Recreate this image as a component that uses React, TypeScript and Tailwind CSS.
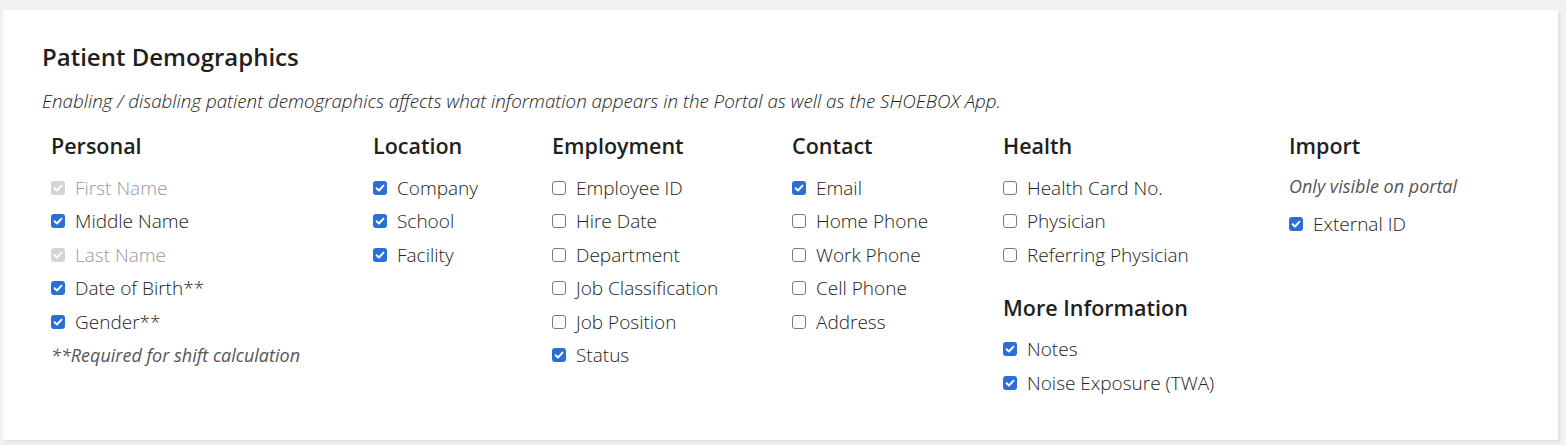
import React from 'react';

type Item = { label: string; checked: boolean; disabled?: boolean };

const personal: Item[] = [
  { label: 'First Name', checked: true, disabled: true },
  { label: 'Middle Name', checked: true },
  { label: 'Last Name', checked: true, disabled: true },
  { label: 'Date of Birth**', checked: true },
  { label: 'Gender**', checked: true },
];

const location: Item[] = [
  { label: 'Company', checked: true },
  { label: 'School', checked: true },
  { label: 'Facility', checked: true },
];

const employment: Item[] = [
  { label: 'Employee ID', checked: false },
  { label: 'Hire Date', checked: false },
  { label: 'Department', checked: false },
  { label: 'Job Classification', checked: false },
  { label: 'Job Position', checked: false },
  { label: 'Status', checked: true },
];

const contact: Item[] = [
  { label: 'Email', checked: true },
  { label: 'Home Phone', checked: false },
  { label: 'Work Phone', checked: false },
  { label: 'Cell Phone', checked: false },
  { label: 'Address', checked: false },
];

const health: Item[] = [
  { label: 'Health Card No.', checked: false },
  { label: 'Physician', checked: false },
  { label: 'Referring Physician', checked: false },
];

const moreInfo: Item[] = [
  { label: 'Notes', checked: true },
  { label: 'Noise Exposure (TWA)', checked: true },
];

function Box({ checked, disabled }: { checked: boolean; disabled?: boolean }) {
  if (!checked) {
    return <span className="w-[14px] h-[14px] shrink-0 rounded-[3px] border border-[#7a7a7a] bg-white" />;
  }
  return (
    <span className={`w-[14px] h-[14px] shrink-0 rounded-[3px] flex items-center justify-center ${disabled ? 'bg-[#d4d4d4]' : 'bg-[#2b6fd6]'}`}>
      <svg width="10" height="10" viewBox="0 0 10 10" fill="none">
        <path d="M1.6 5.2 L4 7.5 L8.5 2.6" stroke="white" strokeWidth="1.9" strokeLinecap="round" strokeLinejoin="round" />
      </svg>
    </span>
  );
}

function CheckRow({ item }: { item: Item }) {
  return (
    <label className="flex items-center h-[33.5px] gap-[10px]">
      <Box checked={item.checked} disabled={item.disabled} />
      <span className={item.disabled ? 'text-[#999]' : 'text-[#222]'}>{item.label}</span>
    </label>
  );
}

function Heading({ children, className = '' }: { children: React.ReactNode; className?: string }) {
  return <h3 className={`text-[21.5px] leading-[28px] font-semibold text-[#1f1f1f] mb-[11px] ${className}`}>{children}</h3>;
}

function Column({ title, items, width }: { title: string; items: Item[]; width: string }) {
  return (
    <div className={width}>
      <Heading>{title}</Heading>
      {items.map(it => <CheckRow key={it.label} item={it} />)}
    </div>
  );
}

export default function App() {
  return (
    <div className="min-h-[445px] bg-[#f2f2f2] pt-[10px] pl-[3px] pr-[8px]" style={{ fontFamily: '"Open Sans", "Liberation Sans", sans-serif' }}>
      <div className="bg-white h-[430px] pl-[39px] pt-[31px] shadow-[2px_2px_3px_rgba(0,0,0,0.08)]">
        <h2 className="text-[24px] leading-[32px] font-semibold text-[#1f1f1f]">Patient Demographics</h2>
        <p className="mt-[15px] text-[18.8px] leading-[26px] italic font-light text-[#222]">
          Enabling / disabling patient demographics affects what information appears in the Portal as well as the SHOEBOX App.
        </p>

        <div className="flex ml-[9px] mt-[18px] text-[19px] font-light">
          <div className="w-[322px]">
            <Heading>Personal</Heading>
            {personal.map(it => <CheckRow key={it.label} item={it} />)}
            <div className="h-[33.5px] flex items-center text-[18px] italic font-normal text-[#555]">
              **Required for shift calculation
            </div>
          </div>
          <Column title="Location" items={location} width="w-[179px]" />
          <Column title="Employment" items={employment} width="w-[240px]" />
          <Column title="Contact" items={contact} width="w-[211px]" />
          <div className="w-[286px]">
            <Heading>Health</Heading>
            {health.map(it => <CheckRow key={it.label} item={it} />)}
            <Heading className="mt-[22px]">More Information</Heading>
            {moreInfo.map(it => <CheckRow key={it.label} item={it} />)}
          </div>
          <div className="w-[240px]">
            <Heading>Import</Heading>
            <p className="mt-[14px] mb-[9px] text-[18px] leading-[24px] italic font-normal text-[#555]">Only visible on portal</p>
            <CheckRow item={{ label: 'External ID', checked: true }} />
          </div>
        </div>
      </div>
    </div>
  );
}
